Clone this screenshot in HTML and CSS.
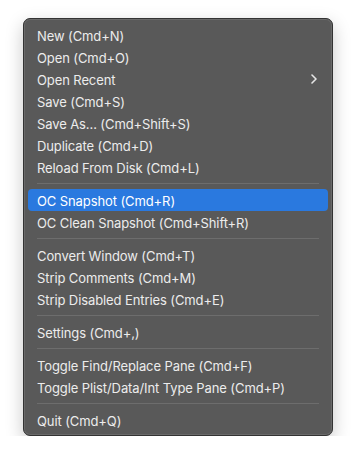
FILE: index.html
```html
<!DOCTYPE html>
<html>
<head>
<meta charset="utf-8">
<link rel="stylesheet" href="styles.css">
</head>
<body>
<div class="menu">
  <div class="item">New (Cmd+N)</div>
  <div class="item">Open (Cmd+O)</div>
  <div class="item submenu">Open Recent<svg class="chev" width="6" height="10" viewBox="0 0 6 10"><path d="M1 1 L5 5 L1 9" fill="none" stroke="#e6e6e6" stroke-width="1.6" stroke-linecap="round" stroke-linejoin="round"/></svg></div>
  <div class="item">Save (Cmd+S)</div>
  <div class="item">Save As... (Cmd+Shift+S)</div>
  <div class="item">Duplicate (Cmd+D)</div>
  <div class="item">Reload From Disk (Cmd+L)</div>
  <div class="sep"></div>
  <div class="item active">OC Snapshot (Cmd+R)</div>
  <div class="item">OC Clean Snapshot (Cmd+Shift+R)</div>
  <div class="sep"></div>
  <div class="item">Convert Window (Cmd+T)</div>
  <div class="item">Strip Comments (Cmd+M)</div>
  <div class="item">Strip Disabled Entries (Cmd+E)</div>
  <div class="sep"></div>
  <div class="item">Settings (Cmd+,)</div>
  <div class="sep"></div>
  <div class="item">Toggle Find/Replace Pane (Cmd+F)</div>
  <div class="item">Toggle Plist/Data/Int Type Pane (Cmd+P)</div>
  <div class="sep"></div>
  <div class="item">Quit (Cmd+Q)</div>
</div>
</body>
</html>
```
FILE: styles.css
```css
html, body {
  margin: 0;
  padding: 0;
  background: #ffffff;
}
body {
  padding: 18px 23px 0 23px;
  font-family: Inter, "Liberation Sans", sans-serif;
}
.menu {
  box-sizing: border-box;
  width: 310px;
  height: 418px;
  background: #595959;
  border: 1px solid #333333;
  border-radius: 7px;
  box-shadow: inset 0 0 0 1px #6a6a6a, 0 6px 18px rgba(0,0,0,0.22);
  padding: 5px 4px 4px 4px;
  display: flex;
  flex-direction: column;
}
.item {
  height: 22px;
  line-height: 22px;
  padding: 1px 9px 0 9px;
  box-sizing: border-box;
  color: #ececec;
  font-size: 13px;
  letter-spacing: -0.1px;
  border-radius: 4px;
  display: flex;
  align-items: center;
  justify-content: space-between;
  white-space: nowrap;
}
.item.active {
  background: #2a79df;
  color: #ffffff;
}
.chev {
  margin-right: 2px;
  margin-top: -1px;
}
.sep {
  height: 11px;
  display: flex;
  align-items: center;
  padding: 0 9px;
}
.sep::before {
  content: "";
  display: block;
  flex: 1;
  height: 1px;
  background: #6d6d6d;
}
```
